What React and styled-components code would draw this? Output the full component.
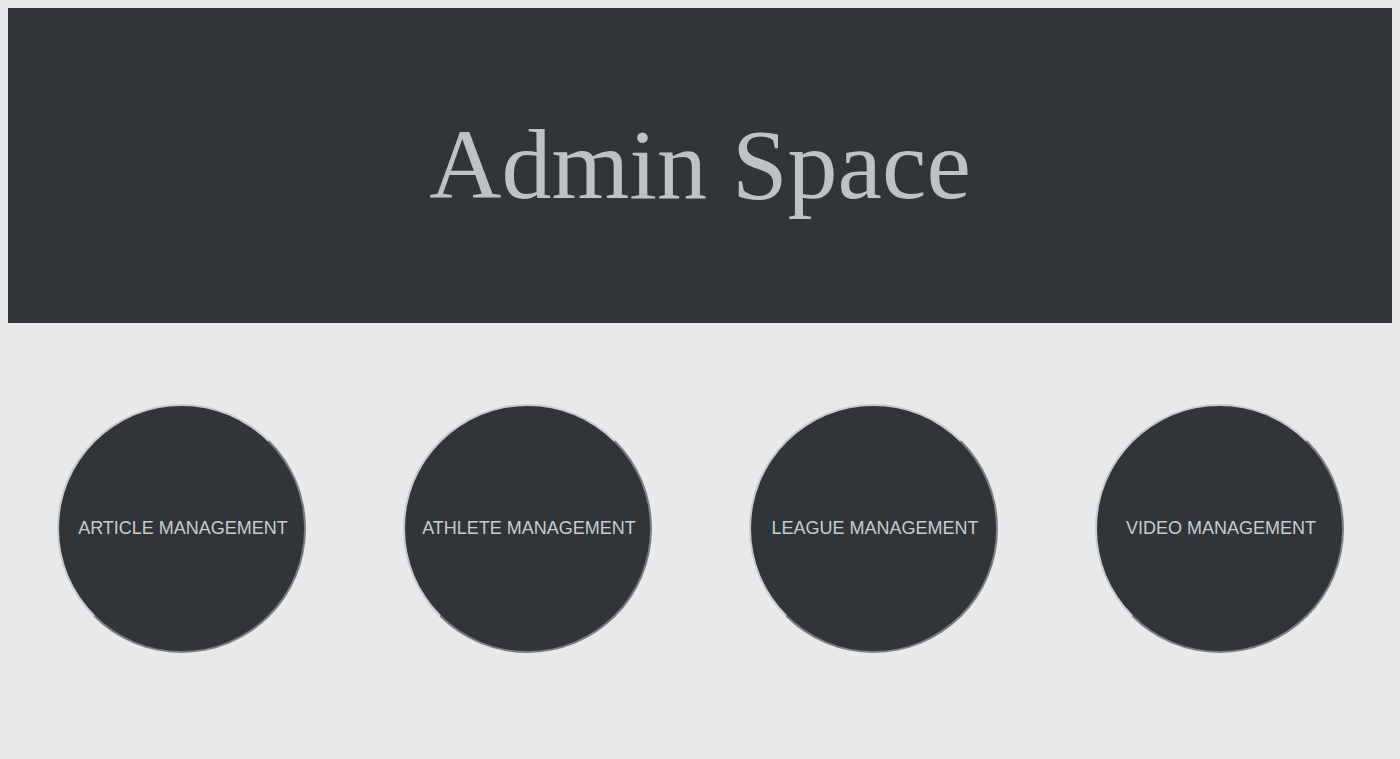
import React from "react";
import styled, { createGlobalStyle } from "styled-components";

const GlobalStyle = createGlobalStyle`
  body {
    margin: 8px;
    background-color: #e8e9eb;
    font-family: "Liberation Serif", "Times New Roman", serif;
  }
`;

const Header = styled.header`
  height: 315px;
  background-color: #313537;
  display: flex;
  align-items: center;
  justify-content: center;
`;

const Title = styled.h1`
  margin: 0;
  font-family: "Liberation Serif", "Times New Roman", serif;
  font-size: 100px;
  font-weight: 400;
  color: #bfc2c5;
  padding-bottom: 2px;
`;

const Grid = styled.section`
  display: grid;
  grid-template-columns: repeat(4, 1fr);
  padding-top: 81px;
`;

const Cell = styled.div`
  display: flex;
  justify-content: center;
`;

const Circle = styled.a`
  box-sizing: border-box;
  width: 249px;
  height: 249px;
  padding-left: 4px;
  border-radius: 50%;
  background-color: #313537;
  border: 2px solid;
  border-color: #c9cacc #7b7d7f #7b7d7f #c9cacc;
  display: flex;
  align-items: center;
  justify-content: center;
  color: #c6ccd3;
  font-family: "Liberation Sans", Arial, sans-serif;
  font-size: 18px;
  text-decoration: none;
  cursor: pointer;
`;

const sections = [
  "ARTICLE MANAGEMENT",
  "ATHLETE MANAGEMENT",
  "LEAGUE MANAGEMENT",
  "VIDEO MANAGEMENT",
];

function App() {
  return (
    <>
      <GlobalStyle />
      <Header>
        <Title>Admin Space</Title>
      </Header>
      <Grid>
        {sections.map((label) => (
          <Cell key={label}>
            <Circle>{label}</Circle>
          </Cell>
        ))}
      </Grid>
    </>
  );
}

export default App;
